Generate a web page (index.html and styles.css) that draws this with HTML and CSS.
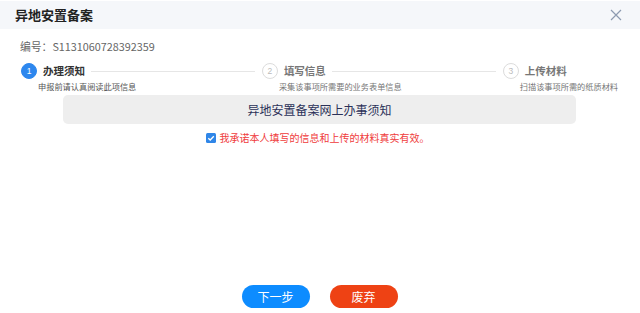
FILE: index.html
```html
<!DOCTYPE html>
<html lang="zh">
<head>
<meta charset="utf-8">
<link rel="stylesheet" href="styles.css">
</head>
<body>
<div class="dialog">
  <div class="header">
    <div class="title">异地安置备案</div>
    <svg class="close" width="12" height="12" viewBox="0 0 12 12"><path d="M1 1L11 11M11 1L1 11" stroke="#8d9bb0" stroke-width="1.2" fill="none"/></svg>
  </div>
  <div class="body">
    <div class="code">编号：S1131060728392359</div>
    <div class="steps">
      <div class="step active">
        <div class="step-head"><span class="circle">1</span><span class="step-title">办理须知</span><span class="line"></span></div>
        <div class="step-desc">申报前请认真阅读此项信息</div>
      </div>
      <div class="step">
        <div class="step-head"><span class="circle">2</span><span class="step-title">填写信息</span><span class="line"></span></div>
        <div class="step-desc">采集该事项所需要的业务表单信息</div>
      </div>
      <div class="step last">
        <div class="step-head"><span class="circle">3</span><span class="step-title">上传材料</span></div>
        <div class="step-desc">扫描该事项所需的纸质材料</div>
      </div>
    </div>
    <div class="notice">异地安置备案网上办事须知</div>
    <div class="agree">
      <svg class="check" width="10" height="10" viewBox="0 0 10 10"><rect x="0" y="0" width="10" height="10" rx="1.5" fill="#2f86e8"/><path d="M2.3 5.2L4.2 7L7.8 3.2" stroke="#fff" stroke-width="1.3" fill="none"/></svg>
      <span>我承诺本人填写的信息和上传的材料真实有效。</span>
    </div>
    <div class="spacer"></div>
    <div class="actions">
      <button class="btn btn-next">下一步</button>
      <button class="btn btn-drop">废弃</button>
    </div>
  </div>
</div>
</body>
</html>
```
FILE: styles.css
```css
* { box-sizing: border-box; }
html, body { margin: 0; padding: 0; background: #fff; }
body { font-family: "Noto Sans CJK SC", "Noto Sans", sans-serif; color: #333; width: 640px; height: 313px; overflow: hidden; }
.dialog { height: 313px; display: flex; flex-direction: column; }
.header { height: 28px; margin-top: 1px; background: #f5f7fa; display: flex; align-items: center; justify-content: space-between; padding: 0 18px 0 15px; flex: none; }
.title { font-size: 13px; font-weight: 700; color: #222; line-height: 16px; }
.close { display: block; }
.body { flex: 1; display: flex; flex-direction: column; }
.code { margin: 10px 0 0 20px; font-size: 10.8px; line-height: 14px; color: #666; }
.steps { display: flex; margin: 10px 22px 0 21px; }
.step { flex: 1; display: flex; flex-direction: column; }
.step.last { flex: none; }
.step-head { display: flex; align-items: center; height: 16px; }
.circle { width: 16px; height: 16px; border-radius: 50%; border: 1px solid #dcdcdc; color: #bbb; font-size: 8.5px; line-height: 14px; text-align: center; flex: none; font-family: "Liberation Sans", sans-serif; }
.step.active .circle { background: #2d87ee; border-color: #2d87ee; color: #fff; }
.step-title { margin-left: 6px; font-size: 10.5px; font-weight: 700; color: #777; line-height: 14px; white-space: nowrap; }
.step.active .step-title { color: #333; }
.line { flex: 1; height: 1px; background: #e6e6e6; margin: 0 7px 0 6px; }
.step-desc { margin: 2px 0 0 17px; font-size: 8.2px; line-height: 11px; color: #777; white-space: nowrap; }
.step.active .step-desc { color: #555; }
.notice { margin: 3px 64px 0 63px; height: 29px; border-radius: 5px; background: #eeeeee; font-size: 12px; color: #2b3158; display: flex; align-items: center; justify-content: center; }
.agree { margin-top: 7px; display: flex; align-items: center; justify-content: center; gap: 4px; font-size: 10px; line-height: 13px; color: #ef3b3b; padding-right: 5px; }
.check { display: block; flex: none; }
.spacer { flex: 1; }
.actions { display: flex; justify-content: center; gap: 20px; margin-bottom: 5px; padding-right: 1px; }
.btn { width: 68px; height: 23px; border: none; border-radius: 12px; color: #fff; font-size: 12px; font-family: "Noto Sans CJK SC", sans-serif; padding: 0; line-height: 23px; }
.btn-next { background: #0d8cff; }
.btn-drop { background: #ee4214; }
```
